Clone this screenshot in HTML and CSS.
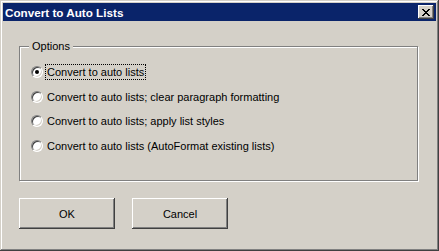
FILE: index.html
```html
<!DOCTYPE html>
<html lang="en">
  <head>
    <meta charset="UTF-8" />
    <meta name="viewport" content="width=device-width, initial-scale=1.0" />
    <title>Convert to Auto Lists</title>
    <link rel="stylesheet" href="styles.css">
  </head>
  <body>
    <div class="dialog">
      <div class="titlebar">
        <span class="title">Convert to Auto Lists</span>
        <button class="close-btn" aria-label="Close">
          <svg width="8" height="7" viewBox="0 0 8 7">
            <path d="M0 0h2v1h-2zM6 0h2v1h-2zM1 1h2v1h-2zM5 1h2v1h-2zM2 2h4v1h-4zM3 3h2v1h-2zM2 4h4v1h-4zM1 5h2v1h-2zM5 5h2v1h-2zM0 6h2v1h-2zM6 6h2v1h-2z" fill="#000"/>
          </svg>
        </button>
      </div>
      <div class="dialog-body">
        <div class="group">
          <span class="group-label">Options</span>
          <ul class="options">
            <li class="option">
              <span class="radio checked"></span>
              <span class="option-label focused">Convert to auto lists</span>
            </li>
            <li class="option">
              <span class="radio"></span>
              <span class="option-label">Convert to auto lists; clear paragraph formatting</span>
            </li>
            <li class="option">
              <span class="radio"></span>
              <span class="option-label">Convert to auto lists; apply list styles</span>
            </li>
            <li class="option">
              <span class="radio"></span>
              <span class="option-label">Convert to auto lists (AutoFormat existing lists)</span>
            </li>
          </ul>
        </div>
        <div class="buttons">
          <button class="btn">OK</button>
          <button class="btn">Cancel</button>
        </div>
      </div>
    </div>
  </body>
</html>
```

FILE: styles.css
```css
* {
  margin: 0;
  padding: 0;
  list-style: none;
  box-sizing: border-box;
}
body {
  background: #d4d0c8;
  font-family: "Liberation Sans", Arial, sans-serif;
  font-size: 11px;
  color: #000;
}
.dialog {
  width: 439px;
  height: 251px;
  padding: 3px;
  background: #d4d0c8;
  box-shadow: inset -1px -1px #404040, inset 1px 1px #d4d0c8,
    inset -2px -2px #808080, inset 2px 2px #fff;
}
.titlebar {
  display: flex;
  align-items: center;
  justify-content: space-between;
  height: 18px;
  padding: 0 2px 0 2px;
  background: #0a246a;
}
.title {
  color: #fff;
  font-weight: bold;
  font-size: 11.7px;
}
.close-btn {
  display: flex;
  align-items: center;
  justify-content: center;
  width: 16px;
  height: 14px;
  border: 0 none;
  background: #d4d0c8;
  box-shadow: inset -1px -1px #404040, inset 1px 1px #fff,
    inset -2px -2px #808080;
}
.dialog-body {
  padding: 0 0 0 16px;
}
.group {
  position: relative;
  width: 399px;
  height: 135px;
  margin-top: 25px;
  border: 1px solid #808080;
  box-shadow: inset 1px 1px #fff, 1px 1px #fff;
}
.group-label {
  position: absolute;
  top: -7px;
  left: 9px;
  padding: 0 3px;
  line-height: 13px;
  background: #d4d0c8;
}
.options {
  padding: 13px 0 0 11px;
}
.option {
  display: flex;
  align-items: center;
  height: 24.5px;
}
.radio {
  position: relative;
  width: 12px;
  height: 12px;
  border-radius: 50%;
  background: #fff;
  border: 1px solid;
  border-color: #808080 #fff #fff #808080;
  box-shadow: inset 1px 1px #404040, inset -1px -1px #d4d0c8;
}
.radio.checked::after {
  content: "";
  position: absolute;
  top: 3px;
  left: 3px;
  width: 4px;
  height: 4px;
  border-radius: 50%;
  background: #000;
}
.option-label {
  margin-left: 2px;
  padding: 0 1px;
  line-height: 14px;
  border: 1px dotted transparent;
}
.option-label.focused {
  border-color: #000;
}
.buttons {
  display: flex;
  gap: 17px;
  margin-top: 17px;
}
.btn {
  width: 96px;
  height: 31px;
  border: 0 none;
  background: #d4d0c8;
  font-family: "Liberation Sans", Arial, sans-serif;
  font-size: 11px;
  color: #000;
  box-shadow: inset -1px -1px #404040, inset 1px 1px #fff,
    inset -2px -2px #808080;
}
```
